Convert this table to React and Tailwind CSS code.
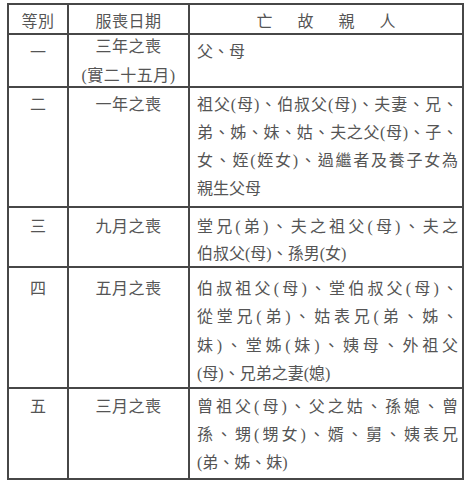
import React from "react";

const J = ({ children }) => (
  <div className="text-justify [text-align-last:justify]">{children}</div>
);
const L = ({ children }) => <div>{children}</div>;

export default function App() {
  const cell = "border-l-2 border-t-2 border-[#474747]";
  const first = "border-t-2 border-[#474747]";
  return (
    <div className="w-[469px] h-[488px] bg-white pt-[3px] pl-[7px] font-['Liberation_Serif','Noto_Sans_CJK_TC',serif] text-[16px] text-[#555555] leading-[28px]">
      <div className="w-[457px] border-2 border-[#474747] grid grid-cols-[58px_121px_274px] grid-rows-[28px_53px_120px_60px_121px_91px]">
        {/* header */}
        <div className="text-center pt-[3px] tracking-[0.5px]">等別</div>
        <div className="border-l-2 border-[#474747] text-center pt-[3px] tracking-[0.5px]">服喪日期</div>
        <div className="border-l-2 border-[#474747] flex justify-center gap-[25px] pt-[3px]">
          <span>亡</span>
          <span>故</span>
          <span>親</span>
          <span>人</span>
        </div>

        {/* row 1 */}
        <div className={`${first} text-center pt-[4px]`}>一</div>
        <div className={`${cell} text-center tracking-[0.5px]`}>
          <div className="-mt-[3px] leading-[29px]">
            <div>三年之喪</div>
            <div>(實二十五月)</div>
          </div>
        </div>
        <div className={`${cell} pl-[7px] pr-[4px] pt-[3px]`}>
          <L>父、母</L>
        </div>

        {/* row 2 */}
        <div className={`${first} text-center pt-[3px]`}>二</div>
        <div className={`${cell} text-center pt-[3px] tracking-[0.5px]`}>一年之喪</div>
        <div className={`${cell} pl-[7px] pr-[4px] pt-[3px]`}>
          <J>祖父(母)、伯叔父(母)、夫妻、兄、</J>
          <J>弟、姊、妹、姑、夫之父(母)、子、</J>
          <J>女、姪(姪女)、過繼者及養子女為</J>
          <L>親生父母</L>
        </div>

        {/* row 3 */}
        <div className={`${first} text-center pt-[5px]`}>三</div>
        <div className={`${cell} text-center pt-[5px] tracking-[0.5px]`}>九月之喪</div>
        <div className={`${cell} pl-[7px] pr-[4px] pt-[5px] leading-[27px]`}>
          <J>堂兄(弟)、夫之祖父(母)、夫之</J>
          <L>伯叔父(母)、孫男(女)</L>
        </div>

        {/* row 4 */}
        <div className={`${first} text-center pt-[7px]`}>四</div>
        <div className={`${cell} text-center pt-[7px] tracking-[0.5px]`}>五月之喪</div>
        <div className={`${cell} pl-[7px] pr-[4px] pt-[7px] leading-[28.3px]`}>
          <J>伯叔祖父(母)、堂伯叔父(母)、</J>
          <J>從堂兄(弟)、姑表兄(弟、姊、</J>
          <J>妹)、堂姊(妹)、姨母、外祖父</J>
          <L>(母)、兄弟之妻(媳)</L>
        </div>

        {/* row 5 */}
        <div className={`${first} text-center pt-[4px]`}>五</div>
        <div className={`${cell} text-center pt-[4px] tracking-[0.5px]`}>三月之喪</div>
        <div className={`${cell} pl-[7px] pr-[4px] pt-[4px]`}>
          <J>曾祖父(母)、父之姑、孫媳、曾</J>
          <J>孫、甥(甥女)、婿、舅、姨表兄</J>
          <L>(弟、姊、妹)</L>
        </div>
      </div>
    </div>
  );
}
